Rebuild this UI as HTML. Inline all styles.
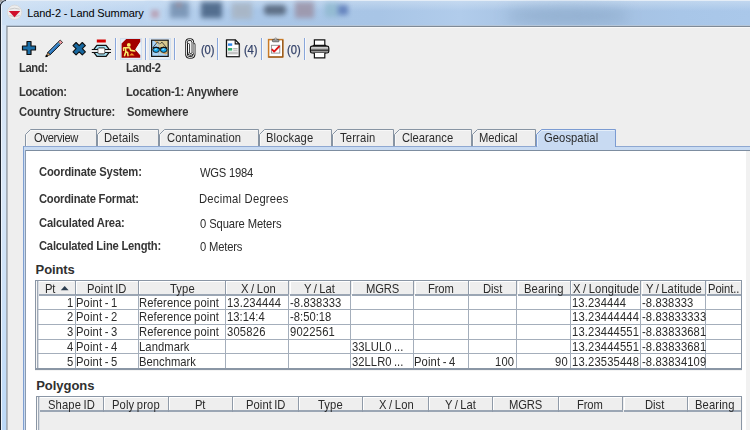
<!DOCTYPE html>
<html><head><meta charset="utf-8"><style>
html,body{margin:0;padding:0;}
body{width:750px;height:430px;overflow:hidden;position:relative;background:#eeeeee;font-family:"Liberation Sans", sans-serif;}
</style></head><body>
<div id="root" style="position:absolute;left:0;top:0;width:750px;height:430px;overflow:hidden">
<div style="position:absolute;left:0;top:0;width:750px;height:25px;overflow:hidden;
background:linear-gradient(90deg,#cde0f4 0px,#bdd5f0 130px,#a9c6e7 250px,#a8c5e6 380px,#b1cceb 460px,#a9c5e5 510px,#a5c2e3 620px,#a8c6e8 680px,#aac8ea 750px);">
<div style="position:absolute;left:0;top:0;width:750px;height:1px;background:#e4edf7"></div>
<div style="position:absolute;left:0;top:1px;width:750px;height:10px;background:linear-gradient(#d8e6f5,rgba(200,220,240,0));opacity:.5"></div>
<div style="position:absolute;left:145px;top:1px;width:18px;height:20px;background:#c4daf2;filter:blur(2px);opacity:.6"></div>
<div style="position:absolute;left:151px;top:10px;width:8px;height:8px;background:#b8a0b4;filter:blur(2px);opacity:.9"></div>
<div style="position:absolute;left:170px;top:2px;width:19px;height:16px;background:#7893b3;filter:blur(2.5px);opacity:.9"></div>
<div style="position:absolute;left:176px;top:3px;width:6px;height:4px;background:#a08890;filter:blur(2px);opacity:.7"></div>
<div style="position:absolute;left:201px;top:2px;width:21px;height:16px;background:#4a6586;filter:blur(2.5px);opacity:.9"></div>
<div style="position:absolute;left:232px;top:3px;width:20px;height:16px;background:#a8b5c4;filter:blur(2.5px);opacity:.9"></div>
<div style="position:absolute;left:264px;top:5px;width:22px;height:10px;background:#56667c;filter:blur(2.5px);opacity:.9;border-radius:4px"></div>
<div style="position:absolute;left:295px;top:2px;width:19px;height:16px;background:#9c93a6;filter:blur(2.5px);opacity:.85"></div>
<div style="position:absolute;left:325px;top:3px;width:14px;height:14px;background:#8fb9cf;filter:blur(2.5px);opacity:.8"></div>
<div style="position:absolute;left:338px;top:5px;width:10px;height:10px;background:#5574b4;filter:blur(2.5px);opacity:.8"></div>
<div style="position:absolute;left:505px;top:8px;width:125px;height:16px;background:#8ba8c8;filter:blur(7px);opacity:.75;border-radius:50%"></div>
</div><svg style="position:absolute;left:0;top:0" width="30" height="26" viewBox="0 0 30 26">
<circle cx="14.6" cy="12.3" r="7.2" fill="#ededed" stroke="#d6d6d6" stroke-width="0.8"/>
<path d="M9.5 9.2 Q14.6 7.2 19.7 9.2" stroke="#b9b9b9" stroke-width="0.7" fill="none"/>
<path d="M9.5 15.5 Q14.6 18 19.7 15.5" stroke="#b9b9b9" stroke-width="0.7" fill="none"/>
<path d="M8.8 11 L20.2 11 L14.5 17.2 Z" fill="#d0102a"/>
</svg><div style="position:absolute;left:0px;top:25px;width:750px;height:1px;background:#b6c6d8;"></div><div style="position:absolute;left:0px;top:26px;width:750px;height:1px;background:#7f8a96;"></div><div style="position:absolute;left:0px;top:27px;width:750px;height:1px;background:#f8f8f8;"></div><div style="position:absolute;left:8px;top:28px;width:742px;height:402px;background:#eeeeee;"></div><div style="position:absolute;left:1px;top:4px;width:1px;height:426px;background:#eef4fb;"></div><div style="position:absolute;left:2px;top:25px;width:4px;height:405px;background:linear-gradient(180deg,#d4e4f6 0%,#d8e7f7 40%,#c6def7 80%,#bcd9f7 100%);"></div><div style="position:absolute;left:6px;top:26px;width:1px;height:404px;background:#a2acb7;"></div><div style="position:absolute;left:7px;top:27px;width:1px;height:403px;background:#b4b9be;"></div><div style="position:absolute;left:0px;top:4px;width:1px;height:426px;background:#1f2630;"></div><div style="position:absolute;left:0;top:0;width:6px;height:6px;border-top-left-radius:6px;border-left:1px solid #1f2630;border-top:1px solid #1f2630;box-sizing:border-box"></div><div style="position:absolute;left:0px;top:0px;width:3px;height:3px;background:#a0a0a0;clip-path:polygon(0 0,100% 0,0 100%)"></div><div style="position:absolute;left:114.5px;top:38px;width:1.2px;height:22px;background:#88a6da;"></div><div style="position:absolute;left:115.7px;top:38px;width:1px;height:22px;background:#f6f8fc;"></div><div style="position:absolute;left:144.5px;top:38px;width:1.2px;height:22px;background:#88a6da;"></div><div style="position:absolute;left:145.7px;top:38px;width:1px;height:22px;background:#f6f8fc;"></div><div style="position:absolute;left:173.5px;top:38px;width:1.2px;height:22px;background:#88a6da;"></div><div style="position:absolute;left:174.7px;top:38px;width:1px;height:22px;background:#f6f8fc;"></div><div style="position:absolute;left:216.5px;top:38px;width:1.2px;height:22px;background:#88a6da;"></div><div style="position:absolute;left:217.7px;top:38px;width:1px;height:22px;background:#f6f8fc;"></div><div style="position:absolute;left:260.5px;top:38px;width:1.2px;height:22px;background:#88a6da;"></div><div style="position:absolute;left:261.7px;top:38px;width:1px;height:22px;background:#f6f8fc;"></div><div style="position:absolute;left:303.5px;top:38px;width:1.2px;height:22px;background:#88a6da;"></div><div style="position:absolute;left:304.7px;top:38px;width:1px;height:22px;background:#f6f8fc;"></div><div style="position:absolute;left:120px;top:38px;width:22px;height:22px;background:radial-gradient(ellipse at 50% 50%,#f4f8fc 30%,#dbe7f4 100%);box-shadow:inset 0 0 0 1px #d3e0ef"></div><div style="position:absolute;left:149px;top:38px;width:22px;height:22px;background:radial-gradient(ellipse at 50% 50%,#f4f8fc 30%,#dbe7f4 100%);box-shadow:inset 0 0 0 1px #d3e0ef"></div><svg style="position:absolute;left:20px;top:39px" width="18" height="18" viewBox="0 0 18 18">
<path d="M7 2.5 H11 V7 H15.5 V11 H11 V15.5 H7 V11 H2.5 V7 H7 Z" fill="#1a6ea8" stroke="#111" stroke-width="1.2" stroke-linejoin="round"/>
</svg><svg style="position:absolute;left:44px;top:38px" width="20" height="20" viewBox="0 0 20 20">
<path d="M3.8 14.4 L14.2 4 L16.6 6.4 L6.2 16.8 Z" fill="#2a74b8" stroke="#111" stroke-width="0.9" stroke-linejoin="round"/>
<path d="M5.2 14.6 L14.8 5" stroke="#5aa0e0" stroke-width="0.8"/>
<path d="M14.2 4 L16.2 2 L18.6 4.4 L16.6 6.4 Z" fill="#f39aa0" stroke="#111" stroke-width="0.8" stroke-linejoin="round"/>
<path d="M14 4.4 L16.4 6.8" stroke="#9fd6cc" stroke-width="0.9"/>
<path d="M3.8 14.4 L6.2 16.8 L2.6 18 Z" fill="#f2b46c" stroke="#111" stroke-width="0.7" stroke-linejoin="round"/>
<path d="M1.8 18.8 L2.4 17 L3.6 18.2 Z" fill="#000" stroke="#000" stroke-width="1"/>
</svg><svg style="position:absolute;left:71px;top:40px" width="17" height="17" viewBox="0 0 17 17">
<path d="M2.00 5.60 L5.10 2.50 L8.20 5.60 L11.30 2.50 L14.40 5.60 L11.30 8.70 L14.40 11.80 L11.30 14.90 L8.20 11.80 L5.10 14.90 L2.00 11.80 L5.10 8.70 Z" fill="#1768a0" stroke="#111" stroke-width="1.1" stroke-linejoin="round"/>
</svg><svg style="position:absolute;left:90px;top:37px" width="24" height="22" viewBox="0 0 24 22">
<rect x="6.8" y="2.5" width="9" height="3" fill="#d40000"/>
<path d="M4.2 11.8 L6.9 8.4 H16.1 L18.8 11.8 V15.8 L16.1 19.4 H6.9 L4.2 15.8 Z" fill="#a8e6f8" stroke="#111" stroke-width="1.3" stroke-linejoin="round"/>
<path d="M8.6 10.9 H14.2 L15 11.7 V16.1 L14.2 16.9 H8.6 L7.8 16.1 V11.7 Z" fill="#fff" stroke="#111" stroke-width="0.9"/>
<rect x="2" y="12.6" width="5.6" height="2.8" fill="#ececec"/>
<rect x="15.2" y="12.6" width="5.8" height="2.8" fill="#ececec"/>
<path d="M1.8 12.5 H7.8 M15 12.5 H21 M1.8 15.5 H7.8 M15 15.5 H21" stroke="#111" stroke-width="1"/>
</svg><svg style="position:absolute;left:120px;top:38px" width="22" height="22" viewBox="0 0 22 22">
<path d="M1.6 5.6 L6.2 1 H20.2 V4 L15.4 11.4 L20.2 17 V19.7 H1.6 Z" fill="#a30000"/>
<path d="M20.2 4 L15.4 11.4 L20.2 17 Z" fill="#f2f6fb"/>
<circle cx="8.8" cy="6.9" r="1.9" fill="#f7ea6c"/>
<path d="M3.8 9.7 H9.6 L10.8 12.4 L14.8 13" stroke="#f7ea6c" stroke-width="1.6" fill="none" stroke-linejoin="round" stroke-linecap="round"/>
<path d="M5.4 9.8 L5.8 13.8 L4.6 17.6 M5.8 13.8 L7.6 14.4 L8 17.6" stroke="#f7ea6c" stroke-width="1.6" fill="none" stroke-linejoin="round" stroke-linecap="round"/>
<path d="M3.4 10 L3.6 13" stroke="#f7ea6c" stroke-width="1.2"/>
<path d="M9.2 17.6 L11.8 15 L14.6 17.6 Z" fill="#f39a2a"/>
</svg><svg style="position:absolute;left:149px;top:38px" width="22" height="22" viewBox="0 0 22 22">
<rect x="2.6" y="2.2" width="16.6" height="16.2" fill="#a8d3f6"/>
<path d="M6.4 2.2 H19.2 V14.6 L17 15.4 L14.4 14.2 L12 15.6 L10.4 12.4 L9.4 9 L7.4 5.6 Z" fill="#d8c98f"/>
<path d="M5.6 2.6 L8.4 4.8 M13.6 14.8 L16.4 15.8 L18.8 14.4 M2.8 10.6 L4.4 12" stroke="#dba25e" stroke-width="1.2" fill="none"/>
<path d="M9.7 2.2 V18.4" stroke="#b7c2c8" stroke-width="1.1"/>
<rect x="2.6" y="2.2" width="16.6" height="16.2" fill="none" stroke="#151515" stroke-width="1.2"/>
<path d="M3.8 9.7 L8.3 4.1 L10.6 5.8 M11.4 5.8 L12.9 4.1 L17.6 9.7" stroke="#2a2a2a" stroke-width="0.8" fill="none"/>
<ellipse cx="7.1" cy="11.8" rx="3.3" ry="2.6" fill="#16aaf0" stroke="#111" stroke-width="0.9"/>
<ellipse cx="14.7" cy="11.8" rx="3.3" ry="2.6" fill="#16aaf0" stroke="#111" stroke-width="0.9"/>
<path d="M3.8 10.2 Q7.1 8.6 10.4 10.2 M11.4 10.2 Q14.7 8.6 18 10.2" stroke="#111" stroke-width="1.3" fill="none"/>
<path d="M10.2 10.6 H11.6" stroke="#111" stroke-width="1.4"/>
<path d="M5.8 11.4 L7.8 10.9 M13.4 11.4 L15.4 10.9" stroke="#d8f6ff" stroke-width="0.9"/>
</svg><svg style="position:absolute;left:183px;top:37px" width="14" height="23" viewBox="0 0 14 23">
<path d="M11.2 7.6 V17.2 Q11.2 20.6 7.3 20.6 Q3.4 20.6 3.4 17.2 V5.6 Q3.4 2.4 6.7 2.4 Q9.9 2.4 9.9 5.6 V15.6 Q9.9 17.4 7.5 17.4 Q5.5 17.4 5.5 15.6 V7.4" fill="none" stroke="#141414" stroke-width="2.5" stroke-linecap="round" stroke-linejoin="round"/>
<path d="M11.2 7.6 V17.2 Q11.2 20.6 7.3 20.6 Q3.4 20.6 3.4 17.2 V5.6 Q3.4 2.4 6.7 2.4 Q9.9 2.4 9.9 5.6 V15.6 Q9.9 17.4 7.5 17.4 Q5.5 17.4 5.5 15.6 V7.4" fill="none" stroke="#fbfbfb" stroke-width="1.0" stroke-linecap="round" stroke-linejoin="round"/>
<path d="M12.1 8.4 V17.4" stroke="#909090" stroke-width="0.9"/>
</svg><svg style="position:absolute;left:224px;top:38px" width="18" height="21" viewBox="0 0 18 21">
<path d="M2.5 1.8 H11.2 L15.3 5.9 V18.7 H2.5 Z" fill="#fff" stroke="#111" stroke-width="1.3" stroke-linejoin="round"/>
<path d="M11.2 1.8 V5.9 H15.3" fill="none" stroke="#111" stroke-width="1.1"/>
<rect x="4" y="5.4" width="4.2" height="2.4" fill="#2f86e8"/>
<rect x="4" y="10" width="4.2" height="2.6" fill="#38b070"/>
<path d="M9.2 10.6 H13.6 M9.2 12.2 H13.6" stroke="#aaa" stroke-width="0.9"/>
<rect x="4" y="13.6" width="9.8" height="2.8" fill="#c4c4c4"/>
<path d="M3.2 18.8 H15.6 V6.6" stroke="#555" stroke-width="0.6" fill="none"/>
</svg><svg style="position:absolute;left:266px;top:37px" width="19" height="22" viewBox="0 0 19 22">
<rect x="2.6" y="2.6" width="14.2" height="17.4" fill="#fff" stroke="#c97a26" stroke-width="1.5"/>
<path d="M2.6 20 H16.8 V3" fill="none" stroke="#86501c" stroke-width="1"/>
<rect x="6.4" y="2.4" width="6.6" height="2.4" rx="0.6" fill="#9a9a9a" stroke="#3a3a3a" stroke-width="0.6"/>
<circle cx="9.7" cy="1.9" r="1.1" fill="#c8c8c8" stroke="#777" stroke-width="0.5"/>
<rect x="5.4" y="8.3" width="8.4" height="7.8" fill="#fff" stroke="#8c8c8c" stroke-width="0.9"/>
<path d="M5.8 12.2 L8.1 14.6 L13.6 9" stroke="#e01414" stroke-width="1.8" fill="none" stroke-linejoin="round"/>
</svg><svg style="position:absolute;left:309px;top:38px" width="22" height="21" viewBox="0 0 22 21">
<defs><linearGradient id="pg" x1="0" y1="0" x2="0" y2="1"><stop offset="0" stop-color="#e6e6e6"/><stop offset="0.45" stop-color="#a8a8a8"/><stop offset="0.55" stop-color="#777"/><stop offset="1" stop-color="#b8b8b8"/></linearGradient></defs>
<path d="M5.4 1.8 H15.8 V7.4 H5.4 Z" fill="#fff" stroke="#111" stroke-width="1.2"/>
<path d="M5.4 7 L3.6 8.4 M15.8 7 L17.6 8.4" stroke="#111" stroke-width="1.1"/>
<path d="M1.4 10 Q1.4 8.2 3.2 8.2 H18 Q19.8 8.2 19.8 10 V13.2 Q19.8 15 18 15 H3.2 Q1.4 15 1.4 13.2 Z" fill="url(#pg)" stroke="#111" stroke-width="1.2"/>
<path d="M2 12.2 H19.2" stroke="#222" stroke-width="1"/>
<path d="M4.6 15 L5.4 15.6 V19.8 H15.8 V15.6 L16.6 15" fill="#fff" stroke="#111" stroke-width="1.2"/>
</svg><div style="position:absolute;left:23px;top:146px;width:727px;height:1px;background:#8ea8d2;"></div><div style="position:absolute;left:24px;top:147px;width:726px;height:3px;background:#c9dbf2;"></div><div style="position:absolute;left:25px;top:150px;width:725px;height:1px;background:#7d8da0;"></div><div style="position:absolute;left:23px;top:146px;width:1px;height:284px;background:#7f9fd0;"></div><div style="position:absolute;left:24px;top:147px;width:1px;height:283px;background:#c9dbf2;"></div><div style="position:absolute;left:25px;top:150px;width:1px;height:280px;background:#8a9ab0;"></div><svg style="position:absolute;left:0;top:0" width="750" height="160" viewBox="0 0 750 160"><path d="M25.5 146 V134.5 L30.5 129.5 H96.5 V146" fill="#eeeeee" stroke="#8794a3" stroke-width="1"/><path d="M26.5 146 V134.9 L30.9 130.5 H95.5" fill="none" stroke="#f8f8f8" stroke-width="1"/><path d="M97.5 146 V134.5 L102.5 129.5 H158.5 V146" fill="#eeeeee" stroke="#8794a3" stroke-width="1"/><path d="M98.5 146 V134.9 L102.9 130.5 H157.5" fill="none" stroke="#f8f8f8" stroke-width="1"/><path d="M159.5 146 V134.5 L164.5 129.5 H258.5 V146" fill="#eeeeee" stroke="#8794a3" stroke-width="1"/><path d="M160.5 146 V134.9 L164.9 130.5 H257.5" fill="none" stroke="#f8f8f8" stroke-width="1"/><path d="M259.5 146 V134.5 L264.5 129.5 H331.5 V146" fill="#eeeeee" stroke="#8794a3" stroke-width="1"/><path d="M260.5 146 V134.9 L264.9 130.5 H330.5" fill="none" stroke="#f8f8f8" stroke-width="1"/><path d="M332.5 146 V134.5 L337.5 129.5 H393.5 V146" fill="#eeeeee" stroke="#8794a3" stroke-width="1"/><path d="M333.5 146 V134.9 L337.9 130.5 H392.5" fill="none" stroke="#f8f8f8" stroke-width="1"/><path d="M394.5 146 V134.5 L399.5 129.5 H471.5 V146" fill="#eeeeee" stroke="#8794a3" stroke-width="1"/><path d="M395.5 146 V134.9 L399.9 130.5 H470.5" fill="none" stroke="#f8f8f8" stroke-width="1"/><path d="M472.5 146 V134.5 L477.5 129.5 H535.5 V146" fill="#eeeeee" stroke="#8794a3" stroke-width="1"/><path d="M473.5 146 V134.9 L477.9 130.5 H534.5" fill="none" stroke="#f8f8f8" stroke-width="1"/><path d="M536.5 147 V134.5 L541.5 129.5 H615.5 V147" fill="#c8daf2" stroke="#7b9bd2" stroke-width="1"/><path d="M537.5 147 V134.9 L541.9 130.5 H614.5" fill="none" stroke="#e6eff9" stroke-width="1"/></svg><div style="position:absolute;left:537px;top:146px;width:78px;height:4px;background:#c8daf2;"></div><div style="position:absolute;left:26px;top:151px;width:720px;height:279px;background:#ffffff;"></div><div style="position:absolute;left:746px;top:151px;width:4px;height:279px;background:#f1f1f1;"></div><div style="position:absolute;left:35px;top:280px;width:707px;height:1px;background:#8a96a5"></div><div style="position:absolute;left:35px;top:280px;width:1px;height:89px;background:#8a96a5"></div><div style="position:absolute;left:36px;top:281px;width:1px;height:88px;background:#f6f6f6"></div><div style="position:absolute;left:37px;top:281px;width:1px;height:88px;background:#a0aab7"></div><div style="position:absolute;left:38px;top:281px;width:1px;height:88px;background:#d8dde3"></div><div style="position:absolute;left:38.5px;top:281px;width:702.5px;height:13.5px;background:#eeeeee"></div><div style="position:absolute;left:38.5px;top:281px;width:35.8px;height:1px;background:#fff"></div><div style="position:absolute;left:74.8px;top:281px;width:1px;height:14.5px;background:#8f9aa8"></div><div style="position:absolute;left:38.5px;top:294.0px;width:36.8px;height:1.5px;background:#9ba6b4"></div><div style="position:absolute;left:76.3px;top:281px;width:61.7px;height:1px;background:#fff"></div><div style="position:absolute;left:76.3px;top:281px;width:1px;height:12.5px;background:#fff"></div><div style="position:absolute;left:137.5px;top:281px;width:1px;height:14.5px;background:#8f9aa8"></div><div style="position:absolute;left:76.3px;top:294.0px;width:61.7px;height:1.5px;background:#9ba6b4"></div><div style="position:absolute;left:139px;top:281px;width:86.30000000000001px;height:1px;background:#fff"></div><div style="position:absolute;left:139px;top:281px;width:1px;height:12.5px;background:#fff"></div><div style="position:absolute;left:224.8px;top:281px;width:1px;height:14.5px;background:#8f9aa8"></div><div style="position:absolute;left:139px;top:294.0px;width:86.30000000000001px;height:1.5px;background:#9ba6b4"></div><div style="position:absolute;left:226.3px;top:281px;width:62.5px;height:1px;background:#fff"></div><div style="position:absolute;left:226.3px;top:281px;width:1px;height:12.5px;background:#fff"></div><div style="position:absolute;left:288.3px;top:281px;width:1px;height:14.5px;background:#8f9aa8"></div><div style="position:absolute;left:226.3px;top:294.0px;width:62.5px;height:1.5px;background:#9ba6b4"></div><div style="position:absolute;left:289.8px;top:281px;width:60.89999999999998px;height:1px;background:#fff"></div><div style="position:absolute;left:289.8px;top:281px;width:1px;height:12.5px;background:#fff"></div><div style="position:absolute;left:350.2px;top:281px;width:1px;height:14.5px;background:#8f9aa8"></div><div style="position:absolute;left:289.8px;top:294.0px;width:60.89999999999998px;height:1.5px;background:#9ba6b4"></div><div style="position:absolute;left:351.7px;top:281px;width:61.80000000000001px;height:1px;background:#fff"></div><div style="position:absolute;left:351.7px;top:281px;width:1px;height:12.5px;background:#fff"></div><div style="position:absolute;left:413.0px;top:281px;width:1px;height:14.5px;background:#8f9aa8"></div><div style="position:absolute;left:351.7px;top:294.0px;width:61.80000000000001px;height:1.5px;background:#9ba6b4"></div><div style="position:absolute;left:414.5px;top:281px;width:53.60000000000002px;height:1px;background:#fff"></div><div style="position:absolute;left:414.5px;top:281px;width:1px;height:12.5px;background:#fff"></div><div style="position:absolute;left:467.6px;top:281px;width:1px;height:14.5px;background:#8f9aa8"></div><div style="position:absolute;left:414.5px;top:294.0px;width:53.60000000000002px;height:1.5px;background:#9ba6b4"></div><div style="position:absolute;left:469.1px;top:281px;width:47.60000000000002px;height:1px;background:#fff"></div><div style="position:absolute;left:469.1px;top:281px;width:1px;height:12.5px;background:#fff"></div><div style="position:absolute;left:516.2px;top:281px;width:1px;height:14.5px;background:#8f9aa8"></div><div style="position:absolute;left:469.1px;top:294.0px;width:47.60000000000002px;height:1.5px;background:#9ba6b4"></div><div style="position:absolute;left:517.7px;top:281px;width:52.59999999999991px;height:1px;background:#fff"></div><div style="position:absolute;left:517.7px;top:281px;width:1px;height:12.5px;background:#fff"></div><div style="position:absolute;left:569.8px;top:281px;width:1px;height:14.5px;background:#8f9aa8"></div><div style="position:absolute;left:517.7px;top:294.0px;width:52.59999999999991px;height:1.5px;background:#9ba6b4"></div><div style="position:absolute;left:571.3px;top:281px;width:69.30000000000007px;height:1px;background:#fff"></div><div style="position:absolute;left:571.3px;top:281px;width:1px;height:12.5px;background:#fff"></div><div style="position:absolute;left:640.1px;top:281px;width:1px;height:14.5px;background:#8f9aa8"></div><div style="position:absolute;left:571.3px;top:294.0px;width:69.30000000000007px;height:1.5px;background:#9ba6b4"></div><div style="position:absolute;left:641.6px;top:281px;width:64.10000000000002px;height:1px;background:#fff"></div><div style="position:absolute;left:641.6px;top:281px;width:1px;height:12.5px;background:#fff"></div><div style="position:absolute;left:705.2px;top:281px;width:1px;height:14.5px;background:#8f9aa8"></div><div style="position:absolute;left:641.6px;top:294.0px;width:64.10000000000002px;height:1.5px;background:#9ba6b4"></div><div style="position:absolute;left:706.7px;top:281px;width:34.299999999999955px;height:1px;background:#fff"></div><div style="position:absolute;left:706.7px;top:281px;width:1px;height:12.5px;background:#fff"></div><div style="position:absolute;left:740.5px;top:281px;width:1px;height:14.5px;background:#8f9aa8"></div><div style="position:absolute;left:706.7px;top:294.0px;width:34.299999999999955px;height:1.5px;background:#9ba6b4"></div><svg style="position:absolute;left:60px;top:284px" width="10" height="8" viewBox="0 0 10 8"><path d="M0.8 6.2 L4.7 2 L8.6 6.2 Z" fill="#2c3e50"/></svg><div style="position:absolute;left:38px;top:309.3px;width:703px;height:1px;background:#a4aebb"></div><div style="position:absolute;left:38px;top:323.9px;width:703px;height:1px;background:#a4aebb"></div><div style="position:absolute;left:38px;top:338.6px;width:703px;height:1px;background:#a4aebb"></div><div style="position:absolute;left:38px;top:353.3px;width:703px;height:1px;background:#a4aebb"></div><div style="position:absolute;left:74.8px;top:295px;width:1px;height:74px;background:#a4aebb"></div><div style="position:absolute;left:137.5px;top:295px;width:1px;height:74px;background:#a4aebb"></div><div style="position:absolute;left:224.8px;top:295px;width:1px;height:74px;background:#a4aebb"></div><div style="position:absolute;left:288.3px;top:295px;width:1px;height:74px;background:#a4aebb"></div><div style="position:absolute;left:350.2px;top:295px;width:1px;height:74px;background:#a4aebb"></div><div style="position:absolute;left:413.0px;top:295px;width:1px;height:74px;background:#a4aebb"></div><div style="position:absolute;left:467.6px;top:295px;width:1px;height:74px;background:#a4aebb"></div><div style="position:absolute;left:516.2px;top:295px;width:1px;height:74px;background:#a4aebb"></div><div style="position:absolute;left:569.8px;top:295px;width:1px;height:74px;background:#a4aebb"></div><div style="position:absolute;left:640.1px;top:295px;width:1px;height:74px;background:#a4aebb"></div><div style="position:absolute;left:705.2px;top:295px;width:1px;height:74px;background:#a4aebb"></div><div style="position:absolute;left:740.5px;top:280px;width:1.4px;height:90px;background:#8a96a5"></div><div style="position:absolute;left:35px;top:368px;width:707px;height:2px;background:#8a96a5"></div><div style="position:absolute;left:35px;top:370px;width:707px;height:1px;background:#f4f4f4"></div><div style="position:absolute;left:39px;top:411px;width:702px;height:19px;background:#eeeeee;"></div><div style="position:absolute;left:36px;top:396px;width:706px;height:1px;background:#8a96a5"></div><div style="position:absolute;left:36px;top:396px;width:1px;height:34px;background:#8a96a5"></div><div style="position:absolute;left:37px;top:397px;width:1px;height:33px;background:#f6f6f6"></div><div style="position:absolute;left:38px;top:397px;width:1px;height:33px;background:#a0aab7"></div><div style="position:absolute;left:39px;top:397px;width:1px;height:33px;background:#d8dde3"></div><div style="position:absolute;left:39.5px;top:397px;width:701.5px;height:13.5px;background:#eeeeee"></div><div style="position:absolute;left:39.5px;top:397px;width:62.8px;height:1px;background:#fff"></div><div style="position:absolute;left:102.8px;top:397px;width:1px;height:14.5px;background:#8f9aa8"></div><div style="position:absolute;left:39.5px;top:410.0px;width:63.8px;height:1.5px;background:#9ba6b4"></div><div style="position:absolute;left:104.3px;top:397px;width:64.10000000000001px;height:1px;background:#fff"></div><div style="position:absolute;left:104.3px;top:397px;width:1px;height:12.5px;background:#fff"></div><div style="position:absolute;left:167.9px;top:397px;width:1px;height:14.5px;background:#8f9aa8"></div><div style="position:absolute;left:104.3px;top:410.0px;width:64.10000000000001px;height:1.5px;background:#9ba6b4"></div><div style="position:absolute;left:169.4px;top:397px;width:63.0px;height:1px;background:#fff"></div><div style="position:absolute;left:169.4px;top:397px;width:1px;height:12.5px;background:#fff"></div><div style="position:absolute;left:231.9px;top:397px;width:1px;height:14.5px;background:#8f9aa8"></div><div style="position:absolute;left:169.4px;top:410.0px;width:63.0px;height:1.5px;background:#9ba6b4"></div><div style="position:absolute;left:233.4px;top:397px;width:64.99999999999997px;height:1px;background:#fff"></div><div style="position:absolute;left:233.4px;top:397px;width:1px;height:12.5px;background:#fff"></div><div style="position:absolute;left:297.9px;top:397px;width:1px;height:14.5px;background:#8f9aa8"></div><div style="position:absolute;left:233.4px;top:410.0px;width:64.99999999999997px;height:1.5px;background:#9ba6b4"></div><div style="position:absolute;left:299.4px;top:397px;width:63.0px;height:1px;background:#fff"></div><div style="position:absolute;left:299.4px;top:397px;width:1px;height:12.5px;background:#fff"></div><div style="position:absolute;left:361.9px;top:397px;width:1px;height:14.5px;background:#8f9aa8"></div><div style="position:absolute;left:299.4px;top:410.0px;width:63.0px;height:1.5px;background:#9ba6b4"></div><div style="position:absolute;left:363.4px;top:397px;width:65.0px;height:1px;background:#fff"></div><div style="position:absolute;left:363.4px;top:397px;width:1px;height:12.5px;background:#fff"></div><div style="position:absolute;left:427.9px;top:397px;width:1px;height:14.5px;background:#8f9aa8"></div><div style="position:absolute;left:363.4px;top:410.0px;width:65.0px;height:1.5px;background:#9ba6b4"></div><div style="position:absolute;left:429.4px;top:397px;width:63.0px;height:1px;background:#fff"></div><div style="position:absolute;left:429.4px;top:397px;width:1px;height:12.5px;background:#fff"></div><div style="position:absolute;left:491.9px;top:397px;width:1px;height:14.5px;background:#8f9aa8"></div><div style="position:absolute;left:429.4px;top:410.0px;width:63.0px;height:1.5px;background:#9ba6b4"></div><div style="position:absolute;left:493.4px;top:397px;width:64.60000000000002px;height:1px;background:#fff"></div><div style="position:absolute;left:493.4px;top:397px;width:1px;height:12.5px;background:#fff"></div><div style="position:absolute;left:557.5px;top:397px;width:1px;height:14.5px;background:#8f9aa8"></div><div style="position:absolute;left:493.4px;top:410.0px;width:64.60000000000002px;height:1.5px;background:#9ba6b4"></div><div style="position:absolute;left:559px;top:397px;width:63.5px;height:1px;background:#fff"></div><div style="position:absolute;left:559px;top:397px;width:1px;height:12.5px;background:#fff"></div><div style="position:absolute;left:622.0px;top:397px;width:1px;height:14.5px;background:#8f9aa8"></div><div style="position:absolute;left:559px;top:410.0px;width:63.5px;height:1.5px;background:#9ba6b4"></div><div style="position:absolute;left:623.5px;top:397px;width:63.799999999999955px;height:1px;background:#fff"></div><div style="position:absolute;left:623.5px;top:397px;width:1px;height:12.5px;background:#fff"></div><div style="position:absolute;left:686.8px;top:397px;width:1px;height:14.5px;background:#8f9aa8"></div><div style="position:absolute;left:623.5px;top:410.0px;width:63.799999999999955px;height:1.5px;background:#9ba6b4"></div><div style="position:absolute;left:688.3px;top:397px;width:52.700000000000045px;height:1px;background:#fff"></div><div style="position:absolute;left:688.3px;top:397px;width:1px;height:12.5px;background:#fff"></div><div style="position:absolute;left:740.5px;top:397px;width:1px;height:14.5px;background:#8f9aa8"></div><div style="position:absolute;left:688.3px;top:410.0px;width:52.700000000000045px;height:1.5px;background:#9ba6b4"></div><div style="position:absolute;left:740.5px;top:396px;width:1.4px;height:34px;background:#8a96a5;"></div><div style="position:absolute;left:742px;top:397px;width:1px;height:33px;background:#fafafa;"></div>
<div style="position:absolute;left:0;top:0;color:#333"><span style="position:absolute;top:8px;font-size:11px;font-weight:400;color:#000;line-height:11px;white-space:nowrap;letter-spacing:-0.106px;left:27.30px;">Land-2 - Land Summary</span><span style="position:absolute;top:44px;font-size:12.2px;font-weight:400;color:#34436a;line-height:12.2px;white-space:nowrap;letter-spacing:-0.136px;left:200.80px;-webkit-text-stroke:0.25px #34436a;transform:scaleX(0.92);transform-origin:0 0;">(0)</span><span style="position:absolute;top:44px;font-size:12.2px;font-weight:400;color:#34436a;line-height:12.2px;white-space:nowrap;letter-spacing:-0.136px;left:244.40px;-webkit-text-stroke:0.25px #34436a;transform:scaleX(0.92);transform-origin:0 0;">(4)</span><span style="position:absolute;top:44px;font-size:12.2px;font-weight:400;color:#34436a;line-height:12.2px;white-space:nowrap;letter-spacing:0.027px;left:287.40px;-webkit-text-stroke:0.25px #34436a;transform:scaleX(0.92);transform-origin:0 0;">(0)</span><span style="position:absolute;top:62px;font-size:12.2px;font-weight:700;color:#363636;line-height:12.2px;white-space:nowrap;letter-spacing:-0.419px;left:19.00px;transform:scaleX(0.92);transform-origin:0 0;">Land:</span><span style="position:absolute;top:62px;font-size:12.2px;font-weight:700;color:#363636;line-height:12.2px;white-space:nowrap;letter-spacing:-0.360px;left:125.90px;transform:scaleX(0.92);transform-origin:0 0;">Land-2</span><span style="position:absolute;top:86px;font-size:12.2px;font-weight:700;color:#363636;line-height:12.2px;white-space:nowrap;letter-spacing:-0.337px;left:19.00px;transform:scaleX(0.92);transform-origin:0 0;">Location:</span><span style="position:absolute;top:86px;font-size:12.2px;font-weight:700;color:#363636;line-height:12.2px;white-space:nowrap;letter-spacing:-0.248px;left:125.90px;transform:scaleX(0.92);transform-origin:0 0;">Location-1: Anywhere</span><span style="position:absolute;top:106px;font-size:12.2px;font-weight:700;color:#363636;line-height:12.2px;white-space:nowrap;letter-spacing:-0.217px;left:18.60px;transform:scaleX(0.92);transform-origin:0 0;">Country Structure:</span><span style="position:absolute;top:106px;font-size:12.2px;font-weight:700;color:#363636;line-height:12.2px;white-space:nowrap;letter-spacing:-0.196px;left:126.60px;transform:scaleX(0.92);transform-origin:0 0;">Somewhere</span><span style="position:absolute;top:132px;font-size:12.2px;font-weight:400;color:#2b2b2b;line-height:12.2px;white-space:nowrap;letter-spacing:-0.359px;left:33.70px;transform:scaleX(0.92);transform-origin:0 0;">Overview</span><span style="position:absolute;top:132px;font-size:12.2px;font-weight:400;color:#2b2b2b;line-height:12.2px;white-space:nowrap;letter-spacing:0.169px;left:104.08px;transform:scaleX(0.92);transform-origin:0 0;">Details</span><span style="position:absolute;top:132px;font-size:12.2px;font-weight:400;color:#2b2b2b;line-height:12.2px;white-space:nowrap;letter-spacing:0.155px;left:166.70px;transform:scaleX(0.92);transform-origin:0 0;">Contamination</span><span style="position:absolute;top:132px;font-size:12.2px;font-weight:400;color:#2b2b2b;line-height:12.2px;white-space:nowrap;letter-spacing:0.154px;left:265.68px;transform:scaleX(0.92);transform-origin:0 0;">Blockage</span><span style="position:absolute;top:132px;font-size:12.2px;font-weight:400;color:#2b2b2b;line-height:12.2px;white-space:nowrap;letter-spacing:0.189px;left:340.00px;transform:scaleX(0.92);transform-origin:0 0;">Terrain</span><span style="position:absolute;top:132px;font-size:12.2px;font-weight:400;color:#2b2b2b;line-height:12.2px;white-space:nowrap;letter-spacing:0.012px;left:401.60px;transform:scaleX(0.92);transform-origin:0 0;">Clearance</span><span style="position:absolute;top:132px;font-size:12.2px;font-weight:400;color:#2b2b2b;line-height:12.2px;white-space:nowrap;letter-spacing:-0.012px;left:479.08px;transform:scaleX(0.92);transform-origin:0 0;">Medical</span><span style="position:absolute;top:132px;font-size:12.2px;font-weight:400;color:#2b2b2b;line-height:12.2px;white-space:nowrap;letter-spacing:0.066px;left:544.20px;transform:scaleX(0.92);transform-origin:0 0;">Geospatial</span><span style="position:absolute;top:166px;font-size:12.2px;font-weight:700;color:#363636;line-height:12.2px;white-space:nowrap;letter-spacing:-0.195px;left:38.80px;transform:scaleX(0.92);transform-origin:0 0;">Coordinate System:</span><span style="position:absolute;top:193px;font-size:12.2px;font-weight:700;color:#363636;line-height:12.2px;white-space:nowrap;letter-spacing:-0.266px;left:38.80px;transform:scaleX(0.92);transform-origin:0 0;">Coordinate Format:</span><span style="position:absolute;top:217px;font-size:12.2px;font-weight:700;color:#363636;line-height:12.2px;white-space:nowrap;letter-spacing:-0.167px;left:38.80px;transform:scaleX(0.92);transform-origin:0 0;">Calculated Area:</span><span style="position:absolute;top:240px;font-size:12.2px;font-weight:700;color:#363636;line-height:12.2px;white-space:nowrap;letter-spacing:-0.243px;left:38.80px;transform:scaleX(0.92);transform-origin:0 0;">Calculated Line Length:</span><span style="position:absolute;top:167px;font-size:12.2px;font-weight:400;color:#2b2b2b;line-height:12.2px;white-space:nowrap;letter-spacing:-0.240px;left:200.00px;transform:scaleX(0.92);transform-origin:0 0;">WGS 1984</span><span style="position:absolute;top:193px;font-size:12.2px;font-weight:400;color:#2b2b2b;line-height:12.2px;white-space:nowrap;letter-spacing:0.265px;left:199.08px;transform:scaleX(0.92);transform-origin:0 0;">Decimal Degrees</span><span style="position:absolute;top:218px;font-size:12.2px;font-weight:400;color:#2b2b2b;line-height:12.2px;white-space:nowrap;letter-spacing:-0.109px;left:200.00px;transform:scaleX(0.92);transform-origin:0 0;">0 Square Meters</span><span style="position:absolute;top:241px;font-size:12.2px;font-weight:400;color:#2b2b2b;line-height:12.2px;white-space:nowrap;letter-spacing:-0.191px;left:200.00px;transform:scaleX(0.92);transform-origin:0 0;">0 Meters</span><span style="position:absolute;top:263px;font-size:13px;font-weight:700;color:#303030;line-height:13px;white-space:nowrap;letter-spacing:-0.119px;left:35.60px;">Points</span><span style="position:absolute;top:379px;font-size:13px;font-weight:700;color:#303030;line-height:13px;white-space:nowrap;letter-spacing:-0.025px;left:36.20px;">Polygons</span><span style="position:absolute;top:283px;font-size:12.2px;font-weight:400;color:#2b2b2b;line-height:12.2px;white-space:nowrap;letter-spacing:-0.264px;left:44.58px;transform:scaleX(0.92);transform-origin:0 0;">Pt</span><span style="position:absolute;top:283px;font-size:12.2px;font-weight:400;color:#2b2b2b;line-height:12.2px;white-space:nowrap;letter-spacing:0.063px;left:86.87px;word-spacing:-0.9px;transform:scaleX(0.92);transform-origin:0 0;">Point ID</span><span style="position:absolute;top:283px;font-size:12.2px;font-weight:400;color:#2b2b2b;line-height:12.2px;white-space:nowrap;letter-spacing:0.137px;left:169.70px;word-spacing:-0.9px;transform:scaleX(0.92);transform-origin:0 0;">Type</span><span style="position:absolute;top:283px;font-size:12.2px;font-weight:400;color:#2b2b2b;line-height:12.2px;white-space:nowrap;letter-spacing:0.162px;left:240.52px;word-spacing:-0.9px;transform:scaleX(0.92);transform-origin:0 0;">X / Lon</span><span style="position:absolute;top:283px;font-size:12.2px;font-weight:400;color:#2b2b2b;line-height:12.2px;white-space:nowrap;letter-spacing:0.076px;left:304.38px;word-spacing:-0.9px;transform:scaleX(0.92);transform-origin:0 0;">Y / Lat</span><span style="position:absolute;top:283px;font-size:12.2px;font-weight:400;color:#2b2b2b;line-height:12.2px;white-space:nowrap;letter-spacing:-0.150px;left:365.59px;word-spacing:-0.9px;transform:scaleX(0.92);transform-origin:0 0;">MGRS</span><span style="position:absolute;top:283px;font-size:12.2px;font-weight:400;color:#2b2b2b;line-height:12.2px;white-space:nowrap;letter-spacing:-0.116px;left:427.99px;word-spacing:-0.9px;transform:scaleX(0.92);transform-origin:0 0;">From</span><span style="position:absolute;top:283px;font-size:12.2px;font-weight:400;color:#2b2b2b;line-height:12.2px;white-space:nowrap;letter-spacing:-0.003px;left:482.51px;word-spacing:-0.9px;transform:scaleX(0.92);transform-origin:0 0;">Dist</span><span style="position:absolute;top:283px;font-size:12.2px;font-weight:400;color:#2b2b2b;line-height:12.2px;white-space:nowrap;letter-spacing:0.135px;left:524.20px;word-spacing:-0.9px;transform:scaleX(0.92);transform-origin:0 0;">Bearing</span><span style="position:absolute;top:283px;font-size:12.2px;font-weight:400;color:#2b2b2b;line-height:12.2px;white-space:nowrap;letter-spacing:0.146px;left:572.83px;word-spacing:-0.9px;transform:scaleX(0.92);transform-origin:0 0;">X / Longitude</span><span style="position:absolute;top:283px;font-size:12.2px;font-weight:400;color:#2b2b2b;line-height:12.2px;white-space:nowrap;letter-spacing:0.090px;left:645.56px;word-spacing:-0.9px;transform:scaleX(0.92);transform-origin:0 0;">Y / Latitude</span><span style="position:absolute;top:283px;font-size:12.2px;font-weight:400;color:#2b2b2b;line-height:12.2px;white-space:nowrap;letter-spacing:-0.084px;left:707.91px;word-spacing:-0.9px;transform:scaleX(0.92);transform-origin:0 0;">Point..</span><span style="position:absolute;top:297px;font-size:12.2px;font-weight:400;color:#2b2b2b;line-height:12.2px;white-space:nowrap;letter-spacing:0.214px;left:66.86px;word-spacing:-0.9px;transform:scaleX(0.92);transform-origin:0 0;">1</span><span style="position:absolute;top:297px;font-size:12.2px;font-weight:400;color:#2b2b2b;line-height:12.2px;white-space:nowrap;letter-spacing:0.151px;left:75.88px;word-spacing:-0.9px;transform:scaleX(0.92);transform-origin:0 0;">Point - 1</span><span style="position:absolute;top:297px;font-size:12.2px;font-weight:400;color:#2b2b2b;line-height:12.2px;white-space:nowrap;letter-spacing:0.117px;left:138.58px;word-spacing:-0.9px;transform:scaleX(0.92);transform-origin:0 0;">Reference point</span><span style="position:absolute;top:297px;font-size:12.2px;font-weight:400;color:#2b2b2b;line-height:12.2px;white-space:nowrap;letter-spacing:0.147px;left:226.80px;word-spacing:-0.9px;transform:scaleX(0.92);transform-origin:0 0;">13.234444</span><span style="position:absolute;top:297px;font-size:12.2px;font-weight:400;color:#2b2b2b;line-height:12.2px;white-space:nowrap;letter-spacing:0.116px;left:290.30px;word-spacing:-0.9px;transform:scaleX(0.92);transform-origin:0 0;">-8.838333</span><span style="position:absolute;top:297px;font-size:12.2px;font-weight:400;color:#2b2b2b;line-height:12.2px;white-space:nowrap;letter-spacing:0.147px;left:571.80px;word-spacing:-0.9px;transform:scaleX(0.92);transform-origin:0 0;">13.234444</span><span style="position:absolute;top:297px;font-size:12.2px;font-weight:400;color:#2b2b2b;line-height:12.2px;white-space:nowrap;letter-spacing:0.116px;left:642.10px;word-spacing:-0.9px;transform:scaleX(0.92);transform-origin:0 0;">-8.838333</span><span style="position:absolute;top:311px;font-size:12.2px;font-weight:400;color:#2b2b2b;line-height:12.2px;white-space:nowrap;letter-spacing:0.214px;left:66.86px;word-spacing:-0.9px;transform:scaleX(0.92);transform-origin:0 0;">2</span><span style="position:absolute;top:311px;font-size:12.2px;font-weight:400;color:#2b2b2b;line-height:12.2px;white-space:nowrap;letter-spacing:0.151px;left:75.88px;word-spacing:-0.9px;transform:scaleX(0.92);transform-origin:0 0;">Point - 2</span><span style="position:absolute;top:311px;font-size:12.2px;font-weight:400;color:#2b2b2b;line-height:12.2px;white-space:nowrap;letter-spacing:0.117px;left:138.58px;word-spacing:-0.9px;transform:scaleX(0.92);transform-origin:0 0;">Reference point</span><span style="position:absolute;top:311px;font-size:12.2px;font-weight:400;color:#2b2b2b;line-height:12.2px;white-space:nowrap;letter-spacing:0.042px;left:226.80px;word-spacing:-0.9px;transform:scaleX(0.92);transform-origin:0 0;">13:14:4</span><span style="position:absolute;top:311px;font-size:12.2px;font-weight:400;color:#2b2b2b;line-height:12.2px;white-space:nowrap;letter-spacing:0.029px;left:290.30px;word-spacing:-0.9px;transform:scaleX(0.92);transform-origin:0 0;">-8:50:18</span><span style="position:absolute;top:311px;font-size:12.2px;font-weight:400;color:#2b2b2b;line-height:12.2px;white-space:nowrap;letter-spacing:0.159px;left:571.80px;word-spacing:-0.9px;transform:scaleX(0.92);transform-origin:0 0;">13.23444444</span><span style="position:absolute;top:311px;font-size:12.2px;font-weight:400;color:#2b2b2b;line-height:12.2px;white-space:nowrap;letter-spacing:0.134px;left:642.10px;word-spacing:-0.9px;transform:scaleX(0.92);transform-origin:0 0;">-8.83833333</span><span style="position:absolute;top:326px;font-size:12.2px;font-weight:400;color:#2b2b2b;line-height:12.2px;white-space:nowrap;letter-spacing:0.214px;left:66.86px;word-spacing:-0.9px;transform:scaleX(0.92);transform-origin:0 0;">3</span><span style="position:absolute;top:326px;font-size:12.2px;font-weight:400;color:#2b2b2b;line-height:12.2px;white-space:nowrap;letter-spacing:0.151px;left:75.88px;word-spacing:-0.9px;transform:scaleX(0.92);transform-origin:0 0;">Point - 3</span><span style="position:absolute;top:326px;font-size:12.2px;font-weight:400;color:#2b2b2b;line-height:12.2px;white-space:nowrap;letter-spacing:0.117px;left:138.58px;word-spacing:-0.9px;transform:scaleX(0.92);transform-origin:0 0;">Reference point</span><span style="position:absolute;top:326px;font-size:12.2px;font-weight:400;color:#2b2b2b;line-height:12.2px;white-space:nowrap;letter-spacing:0.214px;left:226.80px;word-spacing:-0.9px;transform:scaleX(0.92);transform-origin:0 0;">305826</span><span style="position:absolute;top:326px;font-size:12.2px;font-weight:400;color:#2b2b2b;line-height:12.2px;white-space:nowrap;letter-spacing:0.214px;left:290.30px;word-spacing:-0.9px;transform:scaleX(0.92);transform-origin:0 0;">9022561</span><span style="position:absolute;top:326px;font-size:12.2px;font-weight:400;color:#2b2b2b;line-height:12.2px;white-space:nowrap;letter-spacing:0.159px;left:571.80px;word-spacing:-0.9px;transform:scaleX(0.92);transform-origin:0 0;">13.23444551</span><span style="position:absolute;top:326px;font-size:12.2px;font-weight:400;color:#2b2b2b;line-height:12.2px;white-space:nowrap;letter-spacing:0.134px;left:642.10px;word-spacing:-0.9px;transform:scaleX(0.92);transform-origin:0 0;">-8.83833681</span><span style="position:absolute;top:341px;font-size:12.2px;font-weight:400;color:#2b2b2b;line-height:12.2px;white-space:nowrap;letter-spacing:0.214px;left:66.86px;word-spacing:-0.9px;transform:scaleX(0.92);transform-origin:0 0;">4</span><span style="position:absolute;top:341px;font-size:12.2px;font-weight:400;color:#2b2b2b;line-height:12.2px;white-space:nowrap;letter-spacing:0.151px;left:75.88px;word-spacing:-0.9px;transform:scaleX(0.92);transform-origin:0 0;">Point - 4</span><span style="position:absolute;top:341px;font-size:12.2px;font-weight:400;color:#2b2b2b;line-height:12.2px;white-space:nowrap;letter-spacing:0.093px;left:138.58px;word-spacing:-0.9px;transform:scaleX(0.92);transform-origin:0 0;">Landmark</span><span style="position:absolute;top:341px;font-size:12.2px;font-weight:400;color:#2b2b2b;line-height:12.2px;white-space:nowrap;letter-spacing:0.060px;left:352.20px;word-spacing:-0.9px;transform:scaleX(0.92);transform-origin:0 0;">33LUL0 ...</span><span style="position:absolute;top:341px;font-size:12.2px;font-weight:400;color:#2b2b2b;line-height:12.2px;white-space:nowrap;letter-spacing:0.159px;left:571.80px;word-spacing:-0.9px;transform:scaleX(0.92);transform-origin:0 0;">13.23444551</span><span style="position:absolute;top:341px;font-size:12.2px;font-weight:400;color:#2b2b2b;line-height:12.2px;white-space:nowrap;letter-spacing:0.134px;left:642.10px;word-spacing:-0.9px;transform:scaleX(0.92);transform-origin:0 0;">-8.83833681</span><span style="position:absolute;top:356px;font-size:12.2px;font-weight:400;color:#2b2b2b;line-height:12.2px;white-space:nowrap;letter-spacing:0.214px;left:66.86px;word-spacing:-0.9px;transform:scaleX(0.92);transform-origin:0 0;">5</span><span style="position:absolute;top:356px;font-size:12.2px;font-weight:400;color:#2b2b2b;line-height:12.2px;white-space:nowrap;letter-spacing:0.151px;left:75.88px;word-spacing:-0.9px;transform:scaleX(0.92);transform-origin:0 0;">Point - 5</span><span style="position:absolute;top:356px;font-size:12.2px;font-weight:400;color:#2b2b2b;line-height:12.2px;white-space:nowrap;letter-spacing:0.033px;left:138.58px;word-spacing:-0.9px;transform:scaleX(0.92);transform-origin:0 0;">Benchmark</span><span style="position:absolute;top:356px;font-size:12.2px;font-weight:400;color:#2b2b2b;line-height:12.2px;white-space:nowrap;letter-spacing:0.060px;left:352.20px;word-spacing:-0.9px;transform:scaleX(0.92);transform-origin:0 0;">32LLR0 ...</span><span style="position:absolute;top:356px;font-size:12.2px;font-weight:400;color:#2b2b2b;line-height:12.2px;white-space:nowrap;letter-spacing:0.151px;left:414.08px;word-spacing:-0.9px;transform:scaleX(0.92);transform-origin:0 0;">Point - 4</span><span style="position:absolute;top:356px;font-size:12.2px;font-weight:400;color:#2b2b2b;line-height:12.2px;white-space:nowrap;letter-spacing:0.214px;left:495.39px;word-spacing:-0.9px;transform:scaleX(0.92);transform-origin:0 0;">100</span><span style="position:absolute;top:356px;font-size:12.2px;font-weight:400;color:#2b2b2b;line-height:12.2px;white-space:nowrap;letter-spacing:0.214px;left:555.43px;word-spacing:-0.9px;transform:scaleX(0.92);transform-origin:0 0;">90</span><span style="position:absolute;top:356px;font-size:12.2px;font-weight:400;color:#2b2b2b;line-height:12.2px;white-space:nowrap;letter-spacing:0.159px;left:571.80px;word-spacing:-0.9px;transform:scaleX(0.92);transform-origin:0 0;">13.23535448</span><span style="position:absolute;top:356px;font-size:12.2px;font-weight:400;color:#2b2b2b;line-height:12.2px;white-space:nowrap;letter-spacing:0.134px;left:642.10px;word-spacing:-0.9px;transform:scaleX(0.92);transform-origin:0 0;">-8.83834109</span><span style="position:absolute;top:399px;font-size:12.2px;font-weight:400;color:#2b2b2b;line-height:12.2px;white-space:nowrap;letter-spacing:0.129px;left:48.43px;word-spacing:-0.9px;transform:scaleX(0.92);transform-origin:0 0;">Shape ID</span><span style="position:absolute;top:399px;font-size:12.2px;font-weight:400;color:#2b2b2b;line-height:12.2px;white-space:nowrap;letter-spacing:0.151px;left:111.96px;word-spacing:-0.9px;transform:scaleX(0.92);transform-origin:0 0;">Poly prop</span><span style="position:absolute;top:399px;font-size:12.2px;font-weight:400;color:#2b2b2b;line-height:12.2px;white-space:nowrap;letter-spacing:-0.264px;left:194.98px;word-spacing:-0.9px;transform:scaleX(0.92);transform-origin:0 0;">Pt</span><span style="position:absolute;top:399px;font-size:12.2px;font-weight:400;color:#2b2b2b;line-height:12.2px;white-space:nowrap;letter-spacing:0.063px;left:245.62px;word-spacing:-0.9px;transform:scaleX(0.92);transform-origin:0 0;">Point ID</span><span style="position:absolute;top:399px;font-size:12.2px;font-weight:400;color:#2b2b2b;line-height:12.2px;white-space:nowrap;letter-spacing:0.137px;left:318.45px;word-spacing:-0.9px;transform:scaleX(0.92);transform-origin:0 0;">Type</span><span style="position:absolute;top:399px;font-size:12.2px;font-weight:400;color:#2b2b2b;line-height:12.2px;white-space:nowrap;letter-spacing:0.162px;left:378.87px;word-spacing:-0.9px;transform:scaleX(0.92);transform-origin:0 0;">X / Lon</span><span style="position:absolute;top:399px;font-size:12.2px;font-weight:400;color:#2b2b2b;line-height:12.2px;white-space:nowrap;letter-spacing:0.076px;left:445.03px;word-spacing:-0.9px;transform:scaleX(0.92);transform-origin:0 0;">Y / Lat</span><span style="position:absolute;top:399px;font-size:12.2px;font-weight:400;color:#2b2b2b;line-height:12.2px;white-space:nowrap;letter-spacing:-0.150px;left:508.69px;word-spacing:-0.9px;transform:scaleX(0.92);transform-origin:0 0;">MGRS</span><span style="position:absolute;top:399px;font-size:12.2px;font-weight:400;color:#2b2b2b;line-height:12.2px;white-space:nowrap;letter-spacing:-0.116px;left:577.44px;word-spacing:-0.9px;transform:scaleX(0.92);transform-origin:0 0;">From</span><span style="position:absolute;top:399px;font-size:12.2px;font-weight:400;color:#2b2b2b;line-height:12.2px;white-space:nowrap;letter-spacing:-0.003px;left:645.01px;word-spacing:-0.9px;transform:scaleX(0.92);transform-origin:0 0;">Dist</span><span style="position:absolute;top:399px;font-size:12.2px;font-weight:400;color:#2b2b2b;line-height:12.2px;white-space:nowrap;letter-spacing:0.135px;left:694.85px;word-spacing:-0.9px;transform:scaleX(0.92);transform-origin:0 0;">Bearing</span></div>
</div>
</body></html>
